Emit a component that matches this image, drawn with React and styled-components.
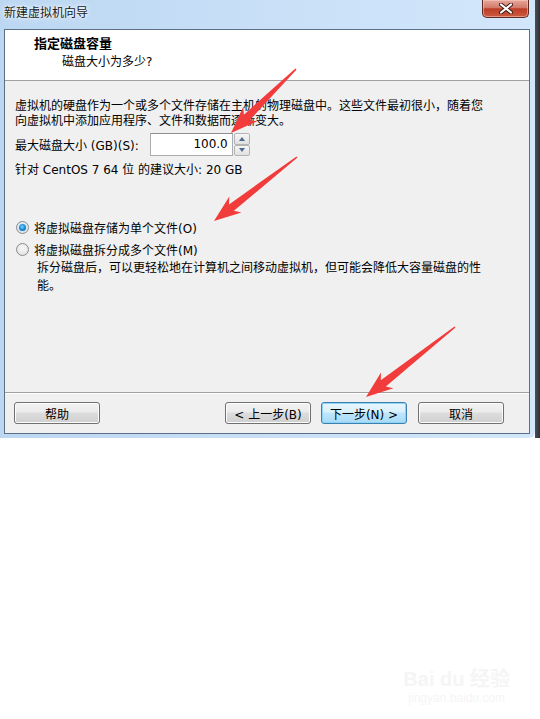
import React from 'react';
import styled, { createGlobalStyle } from 'styled-components';

const GlobalStyle = createGlobalStyle`
  html, body {
    margin: 0;
    padding: 0;
    background: #ffffff;
  }
  body {
    width: 540px;
    height: 719px;
    position: relative;
    overflow: hidden;
    font-family: "DejaVu Sans", "Noto Sans CJK SC", sans-serif;
    font-size: 12px;
    color: #000;
  }
`;

const Screen = styled.div`
  position: relative;
  display: flex;
  height: 438px;
`;

const Window = styled.div`
  flex: 1;
  display: flex;
  flex-direction: column;
  padding: 0 5px 4px 4px;
  background: linear-gradient(90deg, #bcd7f2 0%, #c6def6 40%, #d3e7fb 100%);
  border-bottom-right-radius: 6px;
`;

const Edge = styled.div`
  width: 5px;
  background: linear-gradient(90deg, #4b4f55, #2e3034);
`;

const TitleBar = styled.div`
  height: 29px;
  display: flex;
  justify-content: space-between;
  align-items: flex-start;
`;

const Title = styled.div`
  margin-top: 6px;
  line-height: 15px;
  color: #1a1a1a;
  text-shadow: 0 0 6px #ffffff, 0 0 3px #ffffff;
`;

const CloseButton = styled.div`
  width: 45px;
  height: 17px;
  margin-right: 1px;
  display: flex;
  align-items: center;
  justify-content: center;
  border: 1px solid #5f2a22;
  border-top: none;
  border-radius: 0 0 5px 5px;
  background: linear-gradient(180deg, #e6a89b 0%, #d27b6b 45%, #bd3d27 52%, #cc5a3f 100%);
  box-shadow: inset 0 0 0 1px rgba(255, 210, 200, 0.5);
`;

const Client = styled.div`
  flex: 1;
  display: flex;
  flex-direction: column;
  border: 1px solid #5b6f86;
  background: #f0f0f0;
`;

const Header = styled.div`
  height: 51px;
  box-sizing: border-box;
  padding: 6px 0 0 29px;
  background: #ffffff;
  border-bottom: 1px solid #a0a0a0;
`;

const HeaderTitle = styled.div`
  font-weight: bold;
  font-size: 13px;
  line-height: 16px;
`;

const HeaderSub = styled.div`
  margin-top: 2px;
  padding-left: 28px;
  line-height: 16px;
`;

const Body = styled.div`
  flex: 1;
  display: flex;
  flex-direction: column;
  padding: 18px 10px 0 10px;
`;

const Para = styled.div`
  line-height: 15px;
  margin-top: ${(p) => p.gap || 0}px;
`;

const SizeRow = styled.div`
  display: flex;
  align-items: center;
  height: 23px;
  margin-top: 4px;
  gap: 11px;
`;

const SpinBox = styled.div`
  display: flex;
  align-items: stretch;
  height: 23px;
  gap: 1px;
`;

const SpinInput = styled.div`
  width: 83px;
  box-sizing: border-box;
  border: 1px solid #abadb3;
  border-top-color: #8e8f8f;
  background: #ffffff;
  text-align: right;
  padding-right: 4px;
  line-height: 21px;
`;

const SpinButtons = styled.div`
  display: flex;
  flex-direction: column;
  width: 16px;
`;

const SpinButton = styled.div`
  flex: 1;
  display: flex;
  align-items: center;
  justify-content: center;
  border: 1px solid #b4b4b4;
  border-radius: 2px;
  background: linear-gradient(180deg, #f6f6f6, #e0e0e0);
`;

const Tri = styled.div`
  width: 0;
  height: 0;
  border-left: 3.5px solid transparent;
  border-right: 3.5px solid transparent;
  ${(p) => (p.up ? 'border-bottom: 4px solid #4b6a8e;' : 'border-top: 4px solid #4b6a8e;')}
`;

const RadioRow = styled.div`
  display: flex;
  align-items: center;
  height: 18px;
  gap: 5px;
  margin-top: ${(p) => p.gap || 0}px;
  padding-left: 1px;
`;

const RadioCircle = styled.div`
  width: 13px;
  height: 13px;
  box-sizing: border-box;
  border-radius: 50%;
  border: 1px solid #8a8a8a;
  background: radial-gradient(circle at 50% 40%, #f8f8f8 0%, #dcdcdc 100%);
  display: flex;
  align-items: center;
  justify-content: center;
`;

const RadioDot = styled.div`
  width: 7px;
  height: 7px;
  border-radius: 50%;
  background: radial-gradient(circle at 45% 40%, #7fd1ff 0%, #1c8ad6 50%, #0b4d8f 100%);
  box-shadow: 0 0 0 1px #cfe9fb;
`;

const Desc = styled.div`
  margin-top: 1px;
  padding-left: 22px;
  line-height: 18px;
`;

const Footer = styled.div`
  display: flex;
  align-items: center;
  padding: 9px 25px 9px 9px;
  border-top: 1px solid #a0a0a0;
  box-shadow: inset 0 1px 0 #ffffff;
`;

const Spacer = styled.div`
  flex: 1;
`;

const Button = styled.div`
  width: 86px;
  height: 22px;
  box-sizing: border-box;
  margin-left: ${(p) => p.gap || 0}px;
  display: flex;
  align-items: center;
  justify-content: center;
  border-radius: 3px;
  border: 1px solid ${(p) => (p.primary ? '#3c7fb1' : '#707070')};
  background: ${(p) =>
    p.primary
      ? 'linear-gradient(180deg, #eaf6fd 0%, #d9f0fc 45%, #bee6fd 50%, #a7d9f5 100%)'
      : 'linear-gradient(180deg, #f2f2f2 0%, #ebebeb 45%, #dddddd 50%, #cfcfcf 100%)'};
  box-shadow: inset 0 0 0 1px ${(p) => (p.primary ? '#8ed4f7' : '#fcfcfc')};
`;

const Overlay = styled.svg`
  position: absolute;
  left: 0;
  top: 0;
  pointer-events: none;
`;

const Watermark = styled.div`
  position: absolute;
  right: 30px;
  bottom: 14px;
  display: flex;
  flex-direction: column;
  align-items: center;
  color: #f5f5f5;
  font-family: "Liberation Sans", "Noto Sans CJK SC", sans-serif;
`;

const MarkBig = styled.div`
  font-size: 20px;
  font-weight: bold;
  line-height: 24px;
`;

const MarkSmall = styled.div`
  font-size: 12px;
  line-height: 14px;
`;

function arrowPoints(tx, ty, hx, hy) {
  const dx = hx - tx;
  const dy = hy - ty;
  const len = Math.hypot(dx, dy);
  const ux = dx / len;
  const uy = dy / len;
  const nx = -uy;
  const ny = ux;
  const headLen = 22;
  const headHalf = 10;
  const shaftHalf = 4;
  const bx = hx - ux * headLen;
  const by = hy - uy * headLen;
  const wx = hx - ux * (headLen + 5);
  const wy = hy - uy * (headLen + 5);
  const pts = [
    [tx + nx * 0.8, ty + ny * 0.8],
    [bx + nx * shaftHalf, by + ny * shaftHalf],
    [wx + nx * headHalf, wy + ny * headHalf],
    [hx, hy],
    [wx - nx * headHalf, wy - ny * headHalf],
    [bx - nx * shaftHalf, by - ny * shaftHalf],
    [tx - nx * 0.8, ty - ny * 0.8],
  ];
  return pts.map((p) => p.map((v) => v.toFixed(1)).join(',')).join(' ');
}

const arrows = [
  [296, 69, 231, 133],
  [297, 157, 214, 221],
  [455, 327, 366, 397],
];

const App = () => (
  <>
    <GlobalStyle />
    <Screen>
      <Window>
        <TitleBar>
          <Title>新建虚拟机向导</Title>
          <CloseButton>
            <svg width="14" height="11" viewBox="0 0 14 11">
              <path d="M2 1.5 L12 9.5 M12 1.5 L2 9.5" stroke="#3b1a16" strokeWidth="4" strokeLinecap="round" />
              <path d="M2 1.5 L12 9.5 M12 1.5 L2 9.5" stroke="#ffffff" strokeWidth="2.2" strokeLinecap="round" />
            </svg>
          </CloseButton>
        </TitleBar>
        <Client>
          <Header>
            <HeaderTitle>指定磁盘容量</HeaderTitle>
            <HeaderSub>磁盘大小为多少?</HeaderSub>
          </Header>
          <Body>
            <Para>
              虚拟机的硬盘作为一个或多个文件存储在主机的物理磁盘中。这些文件最初很小，随着您
              <br />
              向虚拟机中添加应用程序、文件和数据而逐渐变大。
            </Para>
            <SizeRow>
              <span>最大磁盘大小 (GB)(S):</span>
              <SpinBox>
                <SpinInput>100.0</SpinInput>
                <SpinButtons>
                  <SpinButton>
                    <Tri up />
                  </SpinButton>
                  <SpinButton>
                    <Tri />
                  </SpinButton>
                </SpinButtons>
              </SpinBox>
            </SizeRow>
            <Para gap={7}>针对 CentOS 7 64 位 的建议大小: 20 GB</Para>
            <RadioRow gap={40}>
              <RadioCircle>
                <RadioDot />
              </RadioCircle>
              <span>将虚拟磁盘存储为单个文件(O)</span>
            </RadioRow>
            <RadioRow gap={4}>
              <RadioCircle />
              <span>将虚拟磁盘拆分成多个文件(M)</span>
            </RadioRow>
            <Desc>
              拆分磁盘后，可以更轻松地在计算机之间移动虚拟机，但可能会降低大容量磁盘的性
              <br />
              能。
            </Desc>
          </Body>
          <Footer>
            <Button>帮助</Button>
            <Spacer />
            <Button>&lt; 上一步(B)</Button>
            <Button primary gap={10}>下一步(N) &gt;</Button>
            <Button gap={11}>取消</Button>
          </Footer>
        </Client>
      </Window>
      <Edge />
      <Overlay width="540" height="438">
        {arrows.map((a, i) => (
          <polygon key={i} points={arrowPoints(...a)} fill="#f23b3b" />
        ))}
      </Overlay>
    </Screen>
    <Watermark>
      <MarkBig>Bai du 经验</MarkBig>
      <MarkSmall>jingyan.baidu.com</MarkSmall>
    </Watermark>
  </>
);

export default App;
